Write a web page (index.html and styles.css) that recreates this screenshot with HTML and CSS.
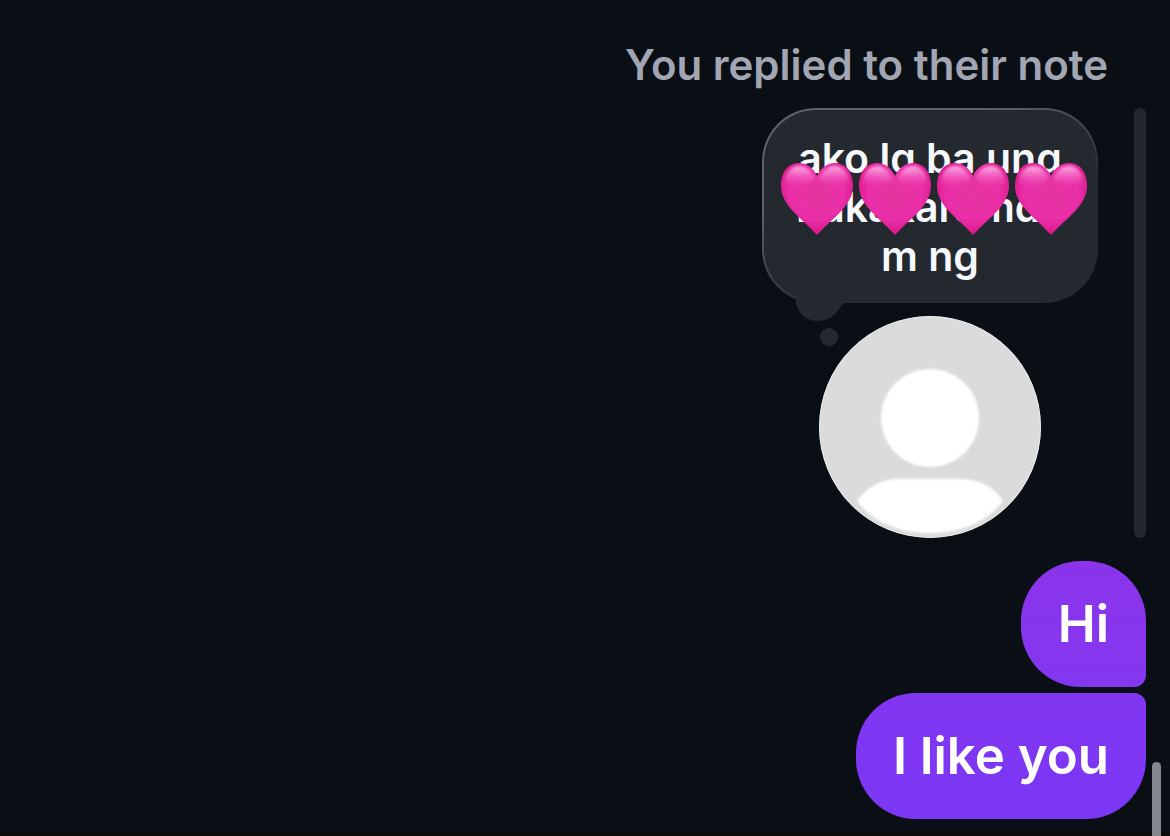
FILE: index.html
```html
<!DOCTYPE html>
<html lang="en">
<head>
    <meta charset="UTF-8">
    <meta name="viewport" content="width=device-width, initial-scale=1.0">
    <title>Chat</title>
    <link rel="stylesheet" href="styles.css">
</head>
<body>
    <main class="chat">
        <p class="reply-label">You replied to their note</p>

        <div class="reply">
            <div class="note">
                <div class="note-bubble">
                    <p class="note-text">ako lg ba ung<br>nakakaramda<br>m ng</p>
                    <div class="hearts">
                        <svg class="heart" viewBox="0 0 74 74" aria-hidden="true">
                            <defs>
                                <radialGradient id="heartFill" cx="0.5" cy="0.42" r="0.62">
                                    <stop offset="0" stop-color="#e4359f"/>
                                    <stop offset="0.6" stop-color="#ea2fa8"/>
                                    <stop offset="1" stop-color="#d5107f"/>
                                </radialGradient>
                                <linearGradient id="heartShine" x1="0" y1="0" x2="0" y2="1">
                                    <stop offset="0" stop-color="#ffc0ee" stop-opacity="0.9"/>
                                    <stop offset="1" stop-color="#f75cc4" stop-opacity="0"/>
                                </linearGradient>
                                <filter id="soften" x="-20%" y="-20%" width="140%" height="140%">
                                    <feGaussianBlur stdDeviation="1.4"/>
                                </filter>
                                <path id="heartShape" d="M37 14C33 5 26 1 19 1C8 1 1 10 1 24C1 44 23 57 35 71Q37 74 39 71C51 57 73 44 73 24C73 10 66 1 55 1C48 1 41 5 37 14Z"/>
                                <g id="heart">
                                    <use href="#heartShape" fill="url(#heartFill)"/>
                                    <path d="M4 24C4 11 11 4 19 4C28 4 33 12 35 18C28 23 13 26 4 24ZM70 24C70 11 63 4 55 4C46 4 41 12 39 18C46 23 61 26 70 24Z" fill="url(#heartShine)" filter="url(#soften)"/>
                                </g>
                            </defs>
                            <use href="#heart"/>
                        </svg>
                        <svg class="heart" viewBox="0 0 74 74" aria-hidden="true"><use href="#heart"/></svg>
                        <svg class="heart" viewBox="0 0 74 74" aria-hidden="true"><use href="#heart"/></svg>
                        <svg class="heart" viewBox="0 0 74 74" aria-hidden="true"><use href="#heart"/></svg>
                    </div>
                    <svg class="note-tail" viewBox="0 0 64 50" aria-hidden="true">
                        <path d="M8 0C7 4 8 7 10 11C14 19 21 23 30 23C39 23 47 18 51 11C53 7 55 5 61 5V0Z"/>
                        <circle cx="41" cy="39" r="9"/>
                    </svg>
                </div>
                <svg class="avatar" viewBox="0 0 222 222" role="img" aria-label="Profile picture">
                    <defs>
                        <clipPath id="avatarClip"><circle cx="111" cy="111" r="111"/></clipPath>
                        <filter id="avatarSoften">
                            <feGaussianBlur stdDeviation="1"/>
                        </filter>
                    </defs>
                    <g clip-path="url(#avatarClip)">
                        <rect width="222" height="222" fill="#dbdbdb"/>
                        <g fill="#fff" filter="url(#avatarSoften)">
                            <circle cx="111" cy="102" r="49"/>
                            <path d="M38 185C48 172 60 163 80 163H142C162 163 175 172 184 185C168 206 142 217 111 217C80 217 54 206 38 185Z"/>
                        </g>
                        <circle cx="111" cy="111" r="110.5" fill="none" stroke="#e9ebed"/>
                    </g>
                </svg>
            </div>
            <div class="reply-bar"></div>
        </div>

        <div class="messages">
            <p class="message message-first">Hi</p>
            <p class="message message-last">I like you</p>
        </div>
    </main>
    <div class="scroll-thumb"></div>
</body>
</html>
```

FILE: styles.css
```css
* {
    box-sizing: border-box;
}

body {
    margin: 0;
    background: #0a0f16;
    color: #fff;
    font-family: Inter, "Liberation Sans", sans-serif;
}

p {
    margin: 0;
}

.chat {
    display: flex;
    flex-direction: column;
    align-items: flex-end;
    min-height: 100vh;
    padding: 40px 24px 12px;
    border-bottom: 4px solid #0c0a0c;
}

.reply-label {
    padding: 0 38px;
    font-size: 42px;
    font-weight: 600;
    line-height: 50px;
    color: #a2a6b2;
}

.reply {
    display: flex;
    gap: 36px;
    margin-top: 18px;
}

.note {
    display: flex;
    flex-direction: column;
    align-items: center;
    gap: 13px;
}

.note-bubble {
    position: relative;
    width: 336px;
    padding: 24px 24px 20px;
    border: 2px solid transparent;
    border-radius: 54px;
    background: linear-gradient(#24282f, #24282f) padding-box,
        linear-gradient(155deg, #5c6166 30%, #24282f 65%) border-box;
}

.note-text {
    font-size: 41px;
    font-weight: 600;
    line-height: 49px;
    text-align: center;
    white-space: nowrap;
    color: #f5f8fc;
}

/* hearts cover part of the note */
.hearts {
    position: absolute;
    top: 52px;
    left: 16px;
    display: flex;
    gap: 4px;
}

.heart {
    width: 74px;
    height: 74px;
}

.note-tail {
    position: absolute;
    top: 188px;
    left: 24px;
    width: 64px;
    height: 50px;
    fill: #24282f;
}

.avatar {
    width: 222px;
    height: 222px;
}

.reply-bar {
    width: 12px;
    border-radius: 6px;
    background: #24282c;
}

.messages {
    display: flex;
    flex-direction: column;
    align-items: flex-end;
    gap: 6px;
    margin-top: 23px;
}

.message {
    padding: 31px 37px;
    border-radius: 60px;
    font-size: 51px;
    font-weight: 600;
    line-height: 64px;
}

.message-first {
    border-bottom-right-radius: 12px;
    background: linear-gradient(#8b34ea, #8337f0);
}

.message-last {
    border-top-right-radius: 12px;
    background: linear-gradient(#8136f1, #7b37f5);
}

.scroll-thumb {
    position: fixed;
    right: 9px;
    bottom: 0;
    width: 9px;
    height: 74px;
    border-radius: 5px 5px 0 0;
    background: #84878b;
}
```
